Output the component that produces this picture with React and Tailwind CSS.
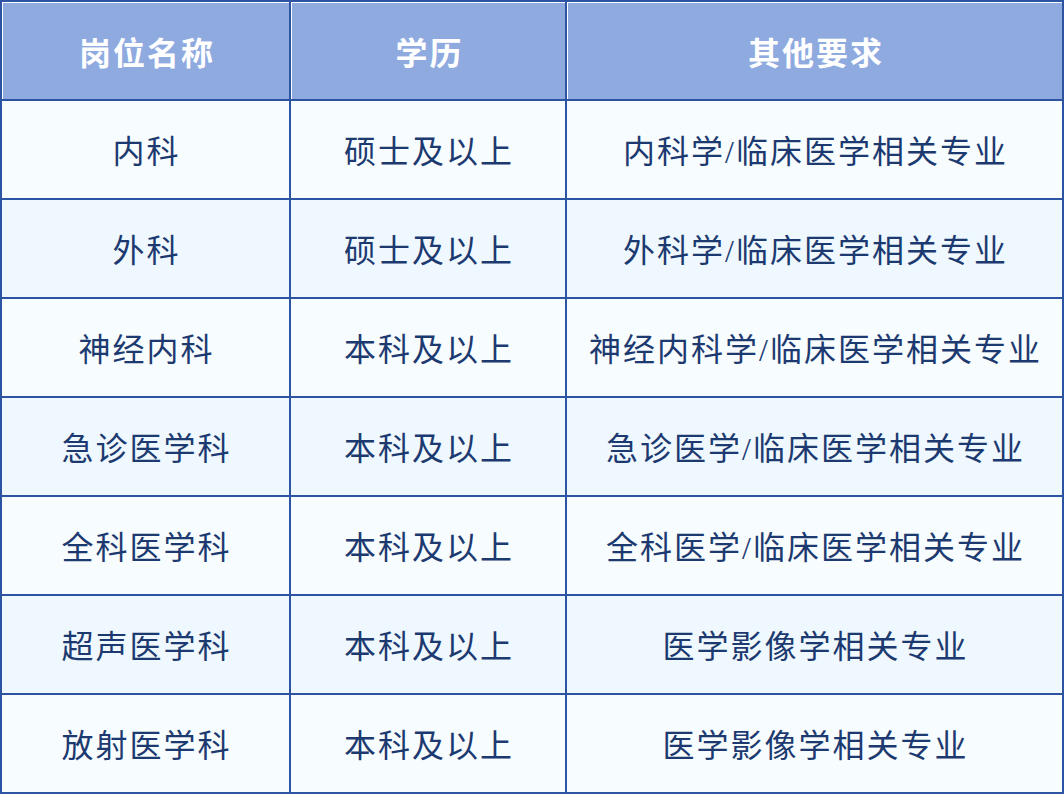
const rows = [
  ["内科", "硕士及以上", "内科学/临床医学相关专业"],
  ["外科", "硕士及以上", "外科学/临床医学相关专业"],
  ["神经内科", "本科及以上", "神经内科学/临床医学相关专业"],
  ["急诊医学科", "本科及以上", "急诊医学/临床医学相关专业"],
  ["全科医学科", "本科及以上", "全科医学/临床医学相关专业"],
  ["超声医学科", "本科及以上", "医学影像学相关专业"],
  ["放射医学科", "本科及以上", "医学影像学相关专业"],
]

const font = { fontFamily: '"Liberation Serif", "Noto Sans CJK SC", serif' }

export default function App() {
  return (
    <div className="w-[1064px] h-[794px] bg-white" style={font}>
      <div className="grid h-full grid-cols-[287px_274px_1fr] grid-rows-[repeat(8,1fr)] gap-[2px] bg-[#2d53a3] p-[2px]">
        {["岗位名称", "学历", "其他要求"].map((h) => (
          <div
            key={h}
            className="flex items-center justify-center border-t border-l border-white bg-[#8eaadf] pt-[6px] pl-[2px] text-[32px] font-bold tracking-[2px] text-white"
          >
            {h}
          </div>
        ))}
        {rows.map((r, i) =>
          r.map((c, j) => (
            <div
              key={i + "-" + j}
              className={
                "flex items-center justify-center pt-[5px] pl-[2px] text-[32px] tracking-[2px] text-[#1d3a70] " +
                (i % 2 === 0 ? "bg-[#f7fcff]" : "bg-[#eef8fe]")
              }
            >
              {c}
            </div>
          ))
        )}
      </div>
    </div>
  )
}
